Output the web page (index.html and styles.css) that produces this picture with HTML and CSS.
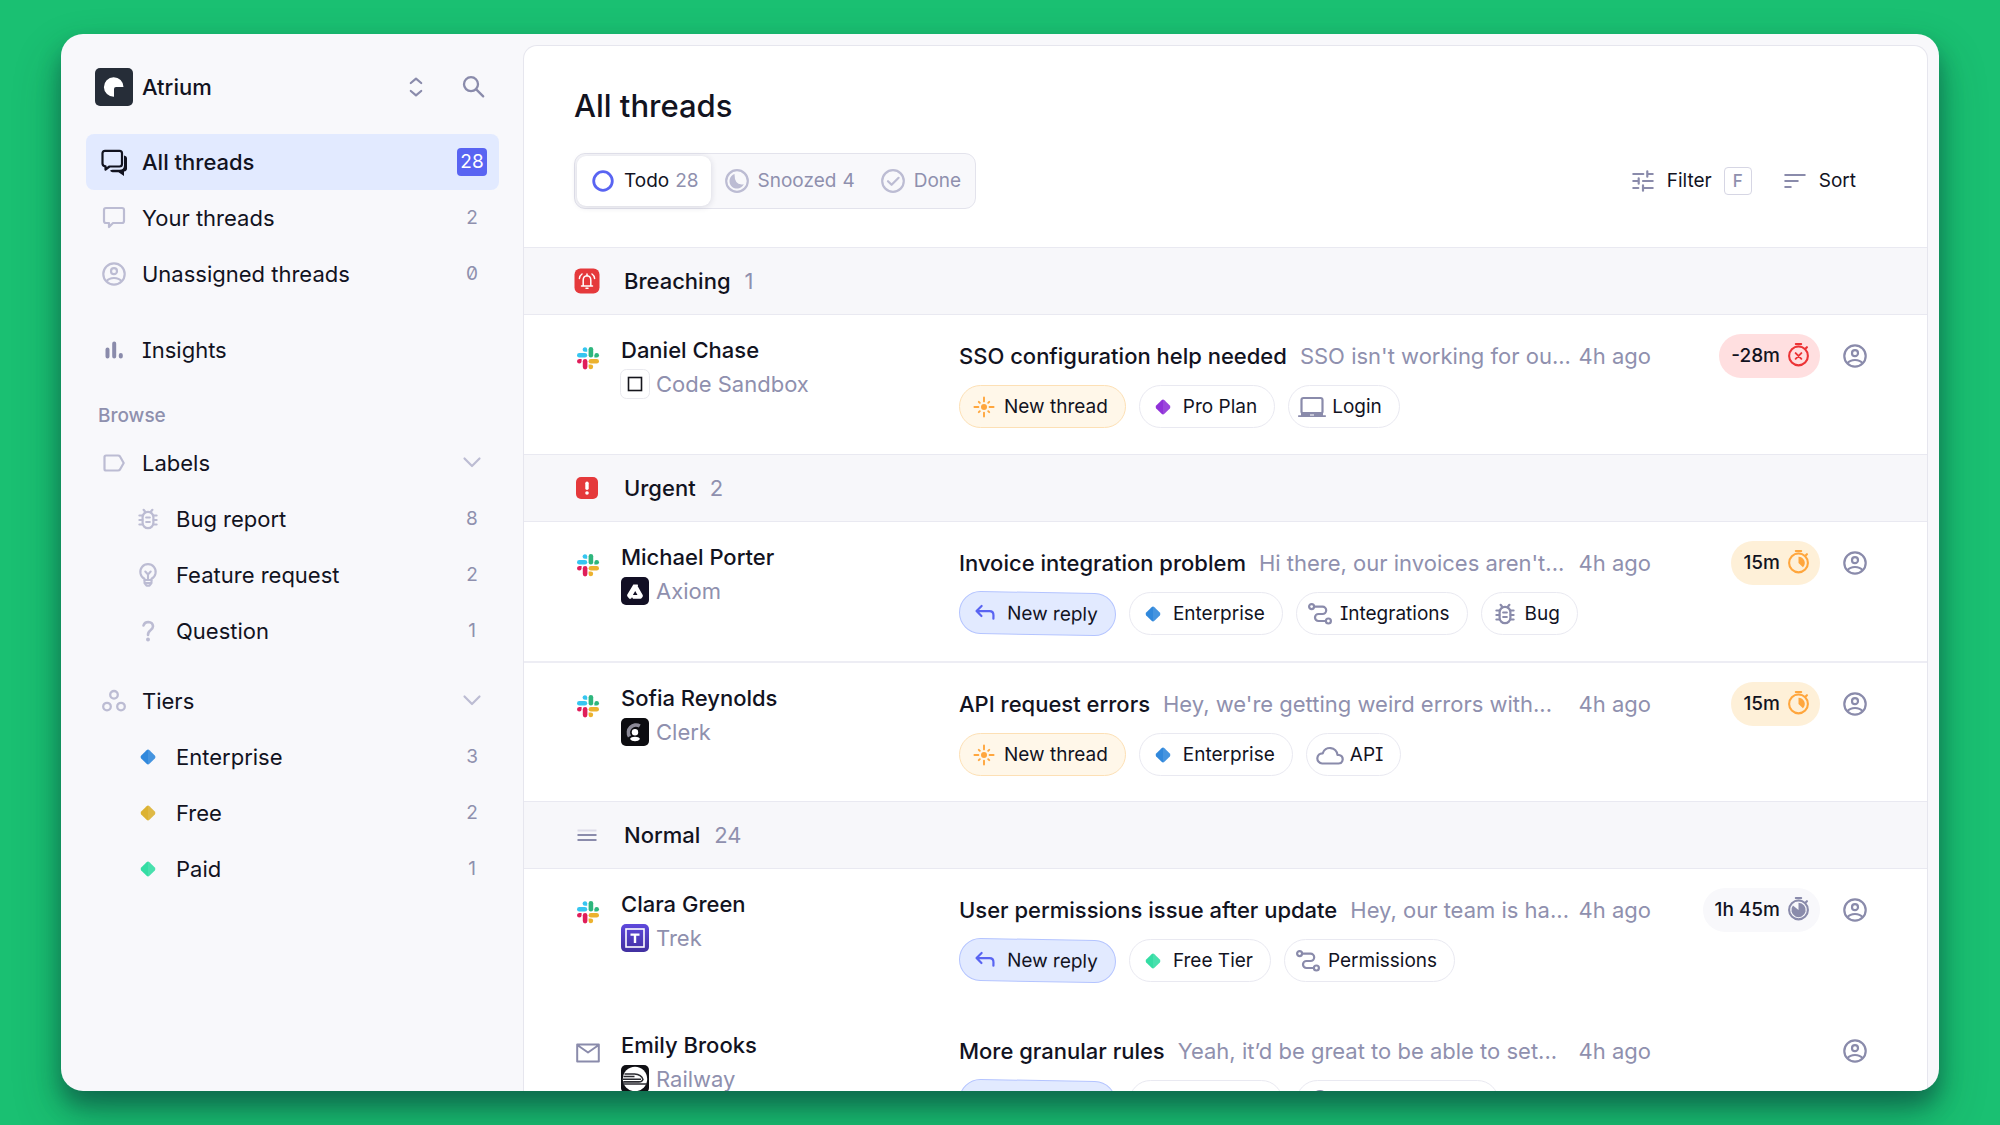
FILE: index.html
```html
<!DOCTYPE html>
<html lang="en">
<head>
    <meta charset="UTF-8">
    <meta name="viewport" content="width=device-width, initial-scale=1.0">
    <title>All threads - Atrium</title>
    <link rel="stylesheet" href="styles.css">
</head>
<body>
    <!-- Shared icons -->
    <svg class="sprite" aria-hidden="true">
        <symbol id="i-user" viewBox="0 0 24 24">
            <g fill="none" stroke="currentColor" stroke-width="2.200">
                <circle cx="12" cy="12" r="10.700"/>
                <circle cx="12" cy="9.200" r="3"/>
                <path d="M4.600 19.200c1.600-2.200 4.300-3.200 7.400-3.200s5.800 1 7.400 3.200"/>
            </g>
        </symbol>
        <symbol id="i-bug" viewBox="0 0 24 24">
            <g fill="none" stroke="currentColor" stroke-width="2.200" stroke-linecap="round">
                <rect x="6.600" y="4.800" width="10.800" height="16.400" rx="5.400"/>
                <path d="M10.200 10.500h3.600M10.200 15h3.600M7.600 2.800l2 2.400M16.400 2.800l-2 2.400M3.400 8.500h3M3.400 13h3M3.400 17.500h3.400M20.600 8.500h-3M20.600 13h-3M20.600 17.500h-3.400"/>
            </g>
        </symbol>
        <symbol id="i-bulb" viewBox="0 0 24 24">
            <g fill="none" stroke="currentColor" stroke-width="2.100" stroke-linecap="round" stroke-linejoin="round">
                <path d="M8.500 17v-1.300a7.700 7.700 0 1 1 7 0V17z"/>
                <path d="M12 16v-5M9.300 8.600 12 11.400l2.700-2.800M8.800 20h6.400M10.800 22.600h2.400M8.500 17v3l2 2.600h3l2-2.600v-3"/>
            </g>
        </symbol>
        <symbol id="i-diamond" viewBox="0 0 24 24">
            <path fill="currentColor" d="M10.600 5.200q1.400-1.200 2.800 0l5.400 5.400q1.200 1.400 0 2.800l-5.400 5.400q-1.400 1.200-2.800 0l-5.400-5.400q-1.200-1.400 0-2.800z"/>
            <path fill="#fff" fill-opacity="0.100" d="M12 4.700q.7 0 1.400.5l5.400 5.400q1.200 1.400 0 2.800l-5.400 5.400q-.7.5-1.400.5z"/>
        </symbol>
        <symbol id="i-chevron" viewBox="0 0 24 24">
            <path fill="none" stroke="currentColor" stroke-width="2.200" stroke-linecap="round" stroke-linejoin="round" d="M4.500 7.500 12 15l7.500-7.500"/>
        </symbol>
        <symbol id="i-spark" viewBox="0 0 24 24">
            <circle cx="12" cy="12" r="3" fill="currentColor"/>
            <path fill="none" stroke="currentColor" stroke-width="1.900" stroke-linecap="round" d="M12 2.400v4M12 17.600v4M2.400 12h4M17.600 12h4M6.800 6.800l1 1M16.200 16.200l1 1M6.800 17.200l1-1M16.200 7.800l1-1"/>
        </symbol>
        <symbol id="i-reply" viewBox="0 0 24 24">
            <path fill="none" stroke="currentColor" stroke-width="2.200" stroke-linecap="round" stroke-linejoin="round" d="M8.500 5 3.500 10l5 5M4 10h12.500q4 0 4 4v3.500"/>
        </symbol>
        <symbol id="i-route" viewBox="0 0 24 24">
            <g fill="none" stroke="currentColor" stroke-width="2.200" stroke-linecap="round">
                <circle cx="3.600" cy="4.600" r="2.500"/>
                <circle cx="20.400" cy="19" r="2.500"/>
                <path d="M6.200 4.600h8.300a3.700 3.700 0 0 1 0 7.400h-4a3.500 3.500 0 0 0 0 7h7.200"/>
            </g>
        </symbol>
        <symbol id="i-laptop" viewBox="0 0 28 24">
            <rect x="3.500" y="3" width="21" height="15.500" rx="2" fill="none" stroke="currentColor" stroke-width="2.200"/>
            <path fill="currentColor" fill-rule="evenodd" d="M3 17h22v3.200h2.400q.6 0 .6.900t-.6.900H.6q-.6 0-.6-.900t.6-.900H3zM12 19v1.400h4V19z"/>
        </symbol>
        <symbol id="i-cloud" viewBox="0 0 28 24">
            <path fill="none" stroke="currentColor" stroke-width="2.200" stroke-linejoin="round" d="M6.200 20.500h16.300a4.300 4.300 0 0 0 .8-8.500q-.8-.300-1.800-.200A7.600 7.600 0 0 0 6.700 10.300a5.100 5.100 0 0 0-.5 10.200z"/>
        </symbol>
        <symbol id="i-watch" viewBox="0 0 24 26">
            <g fill="none" stroke="currentColor" stroke-width="2.200" stroke-linecap="round">
                <circle cx="12" cy="14" r="9.800"/>
                <path d="M9.200 1.600h5.600M19.400 6.200l1.400-1.400"/>
            </g>
        </symbol>
        <symbol id="i-slack" viewBox="0 0 24 24">
            <g fill="#36c5f0"><rect x="1" y="7" width="10.200" height="4.600" rx="2.300"/><path d="M11.200 5.800V3.300a2.300 2.300 0 1 0-2.300 2.500z"/></g>
            <g fill="#2eb67d"><rect x="12.600" y="1" width="4.600" height="10.600" rx="2.300"/><path d="M18.400 11.600h2.400a2.300 2.300 0 1 0-2.400-2.300z"/></g>
            <g fill="#ecb22e"><rect x="12.600" y="13" width="10.400" height="4.600" rx="2.300"/><path d="M12.600 18.600v2.400a2.300 2.300 0 1 0 2.300-2.400z"/></g>
            <g fill="#e01e5a"><rect x="6.800" y="13" width="4.600" height="10.400" rx="2.300"/><path d="M5.600 13H3.200a2.300 2.300 0 1 0 2.400 2.300z"/></g>
        </symbol>
    </svg>

    <div class="window">
        <aside class="sidebar">
            <div class="workspace">
                <svg class="logo" viewBox="0 0 38 38"><rect width="38" height="38" rx="5" fill="#262d38"/><path fill="#fff" d="M28.500 19A9.800 9.800 0 1 0 19 28.800V21q0-2 2-2z"/></svg>
                <span class="workspace-name">Atrium</span>
                <button type="button" class="icon-button" aria-label="Switch workspace">
                    <svg class="icon" viewBox="0 0 24 24"><path fill="none" stroke="currentColor" stroke-width="2.200" stroke-linecap="round" stroke-linejoin="round" d="m6.800 8 5.200-4.300L17.200 8M6.800 16l5.200 4.300 5.200-4.300"/></svg>
                </button>
                <button type="button" class="icon-button" aria-label="Search">
                    <svg class="icon" viewBox="0 0 24 24"><g fill="none" stroke="currentColor" stroke-width="2.300" stroke-linecap="round"><circle cx="10" cy="9.200" r="7"/><path d="m15.200 14.400 7 7"/></g></svg>
                </button>
            </div>

            <nav>
                <ul class="nav-list">
                    <li><a href="#" class="nav-item active">
                        <svg class="nav-icon" viewBox="0 0 28 28"><path fill="none" stroke="currentColor" stroke-width="2.200" stroke-linejoin="round" d="M5 2.800h14.500q2.500 0 2.500 2.500v10.700q0 2.500-2.500 2.500H9.500l-4 3V18.300Q2.500 18 2.500 15.500V5.300q0-2.500 2.500-2.500z"/><path fill="currentColor" d="M24 7.500q3 .5 3 3v10q0 2.500-3 3V28l-5.500-3.800h-6q-1.500 0-2.500-1.400 1-1.100 2.500-1.100h7q4.500 0 4.500-4.500z"/></svg>
                        <span class="nav-label">All threads</span><span class="count badge">28</span></a></li>
                    <li><a href="#" class="nav-item">
                        <svg class="nav-icon" viewBox="0 0 28 28"><path fill="none" stroke="currentColor" stroke-width="2.200" stroke-linejoin="round" d="M6 4h16q2 0 2 2v11q0 2-2 2H13l-4 4v-4H6q-2 0-2-2V6q0-2 2-2z"/></svg>
                        <span class="nav-label">Your threads</span><span class="count">2</span></a></li>
                    <li><a href="#" class="nav-item">
                        <svg class="nav-icon small"><use href="#i-user"/></svg>
                        <span class="nav-label">Unassigned threads</span><span class="count">0</span></a></li>
                </ul>
                <ul class="nav-list spaced">
                    <li><a href="#" class="nav-item">
                        <svg class="nav-icon dark" viewBox="0 0 28 28"><path fill="none" stroke="currentColor" stroke-width="4" stroke-linecap="round" d="M7.500 13.500v7M14.200 7.500v13M20.800 19v1.500"/></svg>
                        <span class="nav-label">Insights</span></a></li>
                </ul>

                <h2 class="nav-heading">Browse</h2>
                <ul class="nav-list">
                    <li><button type="button" class="nav-item" aria-expanded="true">
                        <svg class="nav-icon" viewBox="0 0 28 28"><path fill="none" stroke="currentColor" stroke-width="2.200" stroke-linejoin="round" d="M6 6.500h12q1.300 0 2 1l3.700 6.500-3.700 6.500q-.7 1-2 1H6q-1.500 0-1.500-1.500V8Q4.500 6.500 6 6.500z"/></svg>
                        <span class="nav-label">Labels</span><svg class="chevron"><use href="#i-chevron"/></svg></button></li>
                    <li><a href="#" class="nav-item sub">
                        <svg class="nav-icon small"><use href="#i-bug"/></svg>
                        <span class="nav-label">Bug report</span><span class="count">8</span></a></li>
                    <li><a href="#" class="nav-item sub">
                        <svg class="nav-icon small"><use href="#i-bulb"/></svg>
                        <span class="nav-label">Feature request</span><span class="count">2</span></a></li>
                    <li><a href="#" class="nav-item sub">
                        <svg class="nav-icon small" viewBox="0 0 24 24"><path fill="none" stroke="currentColor" stroke-width="2.600" stroke-linecap="round" d="M7.500 6.500q1-3.500 4.700-3.500 4.500.2 4.800 4.200 0 2-2.500 4Q12 13 12 16"/><circle cx="12" cy="20.500" r="2" fill="currentColor"/></svg>
                        <span class="nav-label">Question</span><span class="count">1</span></a></li>
                </ul>
                <ul class="nav-list tiers">
                    <li><button type="button" class="nav-item" aria-expanded="true">
                        <svg class="nav-icon" viewBox="0 0 28 28"><g fill="none" stroke="currentColor" stroke-width="2.300"><circle cx="14" cy="7.800" r="3.800"/><circle cx="7" cy="19.600" r="3.800"/><circle cx="21" cy="19.600" r="3.800"/></g></svg>
                        <span class="nav-label">Tiers</span><svg class="chevron"><use href="#i-chevron"/></svg></button></li>
                    <li><a href="#" class="nav-item sub">
                        <svg class="nav-icon small blue"><use href="#i-diamond"/></svg>
                        <span class="nav-label">Enterprise</span><span class="count">3</span></a></li>
                    <li><a href="#" class="nav-item sub">
                        <svg class="nav-icon small gold"><use href="#i-diamond"/></svg>
                        <span class="nav-label">Free</span><span class="count">2</span></a></li>
                    <li><a href="#" class="nav-item sub">
                        <svg class="nav-icon small mint"><use href="#i-diamond"/></svg>
                        <span class="nav-label">Paid</span><span class="count">1</span></a></li>
                </ul>
            </nav>
        </aside>

        <main class="panel">
            <header class="panel-header">
                <h1>All threads</h1>
                <div class="toolbar">
                    <div class="tabs" role="tablist">
                        <button type="button" class="tab selected" role="tab" aria-selected="true">
                            <svg class="icon blue-ring" viewBox="0 0 24 24"><circle cx="12" cy="12" r="9.300" fill="none" stroke="currentColor" stroke-width="2.800"/></svg>
                            <span>Todo</span><span class="tab-count">28</span>
                        </button>
                        <button type="button" class="tab" role="tab" aria-selected="false">
                            <svg class="icon" viewBox="0 0 24 24"><circle cx="12" cy="12" r="10.800" fill="none" stroke="currentColor" stroke-width="2.200"/><path fill="currentColor" d="M9.500 5a7.500 7.500 0 1 0 9.300 10.200Q9.500 17 9.500 5z"/></svg>
                            <span>Snoozed</span><span class="tab-count">4</span>
                        </button>
                        <button type="button" class="tab" role="tab" aria-selected="false">
                            <svg class="icon" viewBox="0 0 24 24"><g fill="none" stroke="currentColor" stroke-width="2.200" stroke-linecap="round" stroke-linejoin="round"><circle cx="12" cy="12" r="10.800"/><path d="m7 12.200 3.600 3.600 7-7"/></g></svg>
                            <span>Done</span>
                        </button>
                    </div>
                    <div class="actions">
                        <button type="button" class="action">
                            <svg class="icon" viewBox="0 0 24 24"><path fill="none" stroke="currentColor" stroke-width="2.200" stroke-linecap="round" d="M2.300 5h10M16.300 2.300v5.400M16.300 5h5.400M2.300 12h5.400M7.700 9.300v5.400M12 12h9.700M2.300 19h5M12 16.300v5.400M12 19h9.700"/></svg>
                            <span>Filter</span><kbd>F</kbd>
                        </button>
                        <button type="button" class="action">
                            <svg class="icon" viewBox="0 0 24 24"><path fill="none" stroke="currentColor" stroke-width="2.200" stroke-linecap="round" d="M2.300 6h19.400M2.300 12h12.400M2.300 18h5.400"/></svg>
                            <span>Sort</span>
                        </button>
                    </div>
                </div>
            </header>

            <section>
                <h2 class="group">
                    <svg class="group-icon" viewBox="0 0 26 26"><rect x="0.500" y="0.500" width="25" height="25" rx="6" fill="#e5393b"/><g fill="none" stroke="#fff" stroke-width="1.500" stroke-linecap="round"><path d="M9.200 17.800v-5.600q0-4.200 3.800-4.400 3.800.2 3.800 4.400v5.600M7.500 18h11M13 6v1.500M12 20.200h2M8 6Q5.600 7.600 5.400 10.500M18 6q2.400 1.600 2.600 4.500"/></g></svg>
                    <span>Breaching</span><span class="group-count">1</span>
                </h2>
                <article class="thread">
                    <svg class="source"><use href="#i-slack"/></svg>
                    <div class="customer">
                        <div class="name">Daniel Chase</div>
                        <div class="company"><svg class="company-logo" viewBox="0 0 28 28"><rect x="-0.500" y="-0.500" width="29" height="29" rx="6" fill="#fff" stroke="#e9e9ee"/><rect x="7.500" y="7.500" width="13" height="13" fill="none" stroke="#15151c" stroke-width="1.600"/></svg>Code Sandbox</div>
                    </div>
                    <div class="subject">
                        <div class="summary">
                            <a href="#" class="title">SSO configuration help needed</a>
                            <span class="preview">SSO isn't working for ou...</span>
                            <time>4h ago</time>
                        </div>
                        <div class="chips">
                            <span class="chip new-thread"><svg class="icon"><use href="#i-spark"/></svg>New thread</span>
                            <span class="chip"><svg class="icon purple"><use href="#i-diamond"/></svg>Pro Plan</span>
                            <span class="chip"><svg class="icon wide"><use href="#i-laptop"/></svg>Login</span>
                        </div>
                    </div>
                    <div class="status">
                        <span class="sla late">-28m<svg class="watch" viewBox="0 0 24 26"><use href="#i-watch"/><path fill="none" stroke="currentColor" stroke-width="2" stroke-linecap="round" d="m9 11 6 6M15 11l-6 6"/></svg></span>
                        <button type="button" class="assignee" aria-label="Assign thread"><svg class="icon"><use href="#i-user"/></svg></button>
                    </div>
                </article>
            </section>

            <section>
                <h2 class="group">
                    <svg class="group-icon" viewBox="0 0 26 26"><rect x="2" y="2" width="22" height="22" rx="5" fill="#e5393b"/><rect x="11.300" y="6.500" width="3.400" height="8.500" rx="1.700" fill="#fff"/><circle cx="13" cy="18" r="1.800" fill="#fff"/></svg>
                    <span>Urgent</span><span class="group-count">2</span>
                </h2>
                <article class="thread">
                    <svg class="source"><use href="#i-slack"/></svg>
                    <div class="customer">
                        <div class="name">Michael Porter</div>
                        <div class="company"><svg class="company-logo" viewBox="0 0 28 28"><rect width="28" height="28" rx="5" fill="#120f24"/><path fill="#fff" fill-rule="evenodd" d="M12.300 7.500h4q.8 0 .7.900l-.3.900 5 8.700q.5 1-.2 1.900l-.8 1.200q-.4.600-1.200.600H12l-1-1.500-1 1.500H8.300l-2-2.500q-.4-1 0-1.800l4.700-7.600zM14.200 14l-2.300 4h4.600z"/></svg>Axiom</div>
                    </div>
                    <div class="subject">
                        <div class="summary">
                            <a href="#" class="title">Invoice integration problem</a>
                            <span class="preview">Hi there, our invoices aren't...</span>
                            <time>4h ago</time>
                        </div>
                        <div class="chips">
                            <span class="chip new-reply"><svg class="icon"><use href="#i-reply"/></svg>New reply</span>
                            <span class="chip"><svg class="icon blue"><use href="#i-diamond"/></svg>Enterprise</span>
                            <span class="chip"><svg class="icon"><use href="#i-route"/></svg>Integrations</span>
                            <span class="chip"><svg class="icon"><use href="#i-bug"/></svg>Bug</span>
                        </div>
                    </div>
                    <div class="status">
                        <span class="sla soon">15m<svg class="watch" viewBox="0 0 24 26"><use href="#i-watch"/><path fill="currentColor" d="M12 14V7.500a6.500 6.500 0 0 1 4.600 11.100z"/></svg></span>
                        <button type="button" class="assignee" aria-label="Assign thread"><svg class="icon"><use href="#i-user"/></svg></button>
                    </div>
                </article>
                <article class="thread">
                    <svg class="source"><use href="#i-slack"/></svg>
                    <div class="customer">
                        <div class="name">Sofia Reynolds</div>
                        <div class="company"><svg class="company-logo" viewBox="0 0 28 28"><rect width="28" height="28" rx="5" fill="#0c0c10"/><path fill="none" stroke="#8c8a97" stroke-width="3.600" d="M18.800 8A7.600 7.600 0 0 0 8.500 18.500"/><circle cx="14" cy="14.300" r="3.200" fill="#fff"/><path fill="#fff" d="M9 21q1-2.200 5-2.200t5 2.200q-1.400 2.200-5 2.200T9 21z"/></svg>Clerk</div>
                    </div>
                    <div class="subject">
                        <div class="summary">
                            <a href="#" class="title">API request errors</a>
                            <span class="preview">Hey, we're getting weird errors with...</span>
                            <time>4h ago</time>
                        </div>
                        <div class="chips">
                            <span class="chip new-thread"><svg class="icon"><use href="#i-spark"/></svg>New thread</span>
                            <span class="chip"><svg class="icon blue"><use href="#i-diamond"/></svg>Enterprise</span>
                            <span class="chip"><svg class="icon wide"><use href="#i-cloud"/></svg>API</span>
                        </div>
                    </div>
                    <div class="status">
                        <span class="sla soon">15m<svg class="watch" viewBox="0 0 24 26"><use href="#i-watch"/><path fill="currentColor" d="M12 14V7.500a6.500 6.500 0 0 1 4.600 11.100z"/></svg></span>
                        <button type="button" class="assignee" aria-label="Assign thread"><svg class="icon"><use href="#i-user"/></svg></button>
                    </div>
                </article>
            </section>

            <section class="plain">
                <h2 class="group">
                    <svg class="group-icon" viewBox="0 0 26 26"><path stroke="#dcdbe8" stroke-width="2" d="M3.500 8.500h19"/><path stroke="#8a8bab" stroke-width="2.200" d="M3.500 13h19M3.500 18h19"/></svg>
                    <span>Normal</span><span class="group-count">24</span>
                </h2>
                <article class="thread">
                    <svg class="source"><use href="#i-slack"/></svg>
                    <div class="customer">
                        <div class="name">Clara Green</div>
                        <div class="company"><svg class="company-logo" viewBox="0 0 28 28"><defs><linearGradient id="trek" x2="0" y2="1"><stop offset="0" stop-color="#5e48dc"/><stop offset="1" stop-color="#4130a0"/></linearGradient></defs><rect width="28" height="28" rx="5" fill="url(#trek)"/><rect x="5" y="5" width="18" height="18" fill="none" stroke="#fff" stroke-width="1.600"/><path fill="none" stroke="#fff" stroke-width="2.400" d="M9.500 10.600h9M14 10v9"/></svg>Trek</div>
                    </div>
                    <div class="subject">
                        <div class="summary">
                            <a href="#" class="title">User permissions issue after update</a>
                            <span class="preview">Hey, our team is ha...</span>
                            <time>4h ago</time>
                        </div>
                        <div class="chips">
                            <span class="chip new-reply"><svg class="icon"><use href="#i-reply"/></svg>New reply</span>
                            <span class="chip"><svg class="icon mint"><use href="#i-diamond"/></svg>Free Tier</span>
                            <span class="chip"><svg class="icon"><use href="#i-route"/></svg>Permissions</span>
                        </div>
                    </div>
                    <div class="status">
                        <span class="sla">1h 45m<svg class="watch" viewBox="0 0 24 26"><use href="#i-watch"/><path fill="currentColor" d="M12 14V6.500a7.500 7.500 0 1 1-5.800 2.800z"/></svg></span>
                        <button type="button" class="assignee" aria-label="Assign thread"><svg class="icon"><use href="#i-user"/></svg></button>
                    </div>
                </article>
                <article class="thread">
                    <svg class="source" viewBox="0 0 24 24"><path fill="none" stroke="#8a8bab" stroke-width="2" stroke-linejoin="round" d="M1.200 3.500h21.600v17H1.200zM2 4.500l10 7 10-7"/></svg>
                    <div class="customer">
                        <div class="name">Emily Brooks</div>
                        <div class="company"><svg class="company-logo" viewBox="0 0 28 28"><rect width="28" height="28" rx="5" fill="#0f0f14"/><circle cx="14" cy="14" r="12.200" fill="#fff"/><g fill="none" stroke="#2a2a30" stroke-width="1.400"><path d="M3.500 9h10q7 .5 8.500 5.500-1 2.500-4 2.500H2M2.500 11.500h11M2 14.300h18M2 19h24M3 16.600h16"/></g></svg>Railway</div>
                    </div>
                    <div class="subject">
                        <div class="summary">
                            <a href="#" class="title">More granular rules</a>
                            <span class="preview">Yeah, it’d be great to be able to set...</span>
                            <time>4h ago</time>
                        </div>
                        <div class="chips">
                            <span class="chip new-reply"><svg class="icon"><use href="#i-reply"/></svg>New reply</span>
                            <span class="chip"><svg class="icon blue"><use href="#i-diamond"/></svg>Enterprise</span>
                            <span class="chip"><svg class="icon"><use href="#i-bulb"/></svg>Feature request</span>
                        </div>
                    </div>
                    <div class="status">
                        <button type="button" class="assignee" aria-label="Assign thread"><svg class="icon"><use href="#i-user"/></svg></button>
                    </div>
                </article>
            </section>
        </main>
    </div>
</body>
</html>
```
FILE: styles.css
```css
* {
    box-sizing: border-box;
}

body {
    margin: 0;
    height: 100vh;
    padding: 34px 61px;
    background-color: #1ac072;
    font-family: Inter, "Noto Sans", sans-serif;
    font-size: 22px;
    line-height: 34px;
    color: #12131f;
    overflow: hidden;
}

h1,
h2,
ul {
    margin: 0;
    padding: 0;
    font-size: inherit;
    font-weight: 500;
}

ul {
    list-style: none;
    font-weight: 400;
}

a {
    color: inherit;
    text-decoration: none;
}

button {
    margin: 0;
    padding: 0;
    border: 0;
    background: none;
    font: inherit;
    color: inherit;
    text-align: left;
    cursor: pointer;
}

svg {
    display: block;
    flex: none;
    overflow: visible;
}

.sprite {
    position: absolute;
    width: 0;
    height: 0;
}

.icon {
    width: 24px;
    height: 24px;
}

.window {
    display: flex;
    height: 100%;
    padding: 11px 11px 0 0;
    background-color: #f8f8fb;
    border-radius: 22px;
    box-shadow: 0 14px 22px rgba(8, 36, 50, 0.4), 0 24px 48px rgba(8, 60, 50, 0.3);
    overflow: hidden;
}

/* Sidebar */
.sidebar {
    flex: none;
    width: 462px;
    padding: 23px 24px 0 25px;
}

.workspace {
    display: flex;
    align-items: center;
    height: 38px;
    margin-bottom: 28px;
    padding: 0 14px 0 9px;
    font-weight: 500;
}

.workspace-name {
    flex: 1;
    margin-left: 9px;
}

.logo {
    width: 38px;
    height: 38px;
}

.icon-button {
    margin-left: 33px;
    color: #8a8bab;
}

.nav-item {
    display: flex;
    align-items: center;
    width: 100%;
    height: 56px;
    padding: 0 12px 0 14px;
    border-radius: 8px;
    font-feature-settings: "cv08", "zero";
}

.nav-item.sub {
    padding-left: 48px;
}

.nav-item.active {
    background-color: #e2eaff;
    font-weight: 500;
}

.nav-item.active .nav-icon {
    color: #12131f;
}

.nav-icon {
    width: 28px;
    height: 28px;
    color: #bcbcd3;
}

.nav-icon.small {
    width: 24px;
    height: 24px;
    margin: 0 2px;
}

.nav-icon.dark {
    color: #8a8bab;
}

.nav-label {
    flex: 1;
    margin-left: 14px;
}

.count {
    width: 30px;
    font-size: 19px;
    font-weight: 400;
    line-height: 28px;
    text-align: center;
    color: #8f90ae;
}

.count.badge {
    background-color: #5964f2;
    border-radius: 4px;
    color: #fff;
}

.chevron {
    width: 24px;
    height: 24px;
    margin-right: 3px;
    color: #bcbcd3;
}

.spaced {
    margin-top: 20px;
}

.nav-heading {
    margin: 21px 0 2px 12px;
    font-size: 19px;
    color: #8f90ae;
}

.tiers {
    margin-top: 14px;
}

.icon.blue,
.nav-icon.blue {
    color: #3088dc;
}

.nav-icon.gold {
    color: #dcb232;
}

.icon.mint,
.nav-icon.mint {
    color: #34dda4;
}

.icon.purple {
    color: #9031d9;
}

/* Thread list */
.panel {
    flex: 1;
    min-width: 0;
    background-color: #fff;
    border: 1px solid #e6e6ee;
    border-bottom: 0;
    border-radius: 14px 14px 0 0;
    overflow: hidden;
}

.panel-header {
    padding: 40px 60px 38px 50px;
}

h1 {
    margin-bottom: 27px;
    font-size: 31px;
    font-weight: 450;
    line-height: 40px;
}

.toolbar,
.actions,
.action,
.tabs,
.tab {
    display: flex;
    align-items: center;
}

.toolbar {
    justify-content: space-between;
    font-size: 19px;
}

.tabs {
    height: 56px;
    padding: 2px;
    background-color: #f8f8fb;
    border: 1px solid #e3e3ec;
    border-radius: 11px;
    color: #8f90ae;
}

.tab {
    height: 50px;
    padding: 0 12px 0 14px;
    border-radius: 9px;
}

.tab .icon {
    margin-right: 9px;
    color: #bcbcd3;
}

.tab.selected {
    background-color: #fff;
    box-shadow: 0 1px 6px rgba(30, 30, 70, 0.15);
    color: #12131f;
}

.tab .blue-ring {
    color: #5964f2;
}

.tab-count {
    margin-left: 6px;
    color: #8f90ae;
}

.actions {
    gap: 31px;
    padding-right: 11px;
}

.action .icon {
    margin-right: 12px;
    color: #8a8bab;
}

kbd {
    width: 28px;
    margin-left: 12px;
    border: 1px solid #d6d6e4;
    border-radius: 4px;
    font-family: inherit;
    font-size: 17px;
    font-weight: 500;
    line-height: 26px;
    text-align: center;
    color: #8f90ae;
}

.group {
    display: flex;
    align-items: center;
    height: 68px;
    padding: 0 50px;
    background-color: #f7f7fa;
    border-top: 1px solid #e9e9f1;
    border-bottom: 1px solid #e9e9f1;
}

.group-icon {
    width: 26px;
    height: 26px;
    margin-right: 24px;
}

.group-count {
    margin-left: 14px;
    font-weight: 400;
    color: #8f90ae;
}

.thread {
    display: grid;
    grid-template-columns: 47px 338px minmax(0, 1fr) 216px;
    height: 139px;
    padding: 18px 60px 0 50px;
}

.thread + .thread {
    height: 140px;
    border-top: 2px solid #ededf4;
}

.plain .thread + .thread {
    border-color: transparent;
}

.source {
    width: 24px;
    height: 24px;
    margin: 13px 2px;
}

.name {
    font-weight: 500;
}

.company {
    display: flex;
    align-items: center;
    color: #8f90ae;
}

.company-logo {
    width: 28px;
    height: 28px;
    margin-right: 7px;
}

.summary {
    display: flex;
    padding-top: 6px;
    white-space: nowrap;
}

.title {
    font-weight: 500;
}

.preview {
    flex: 1;
    min-width: 0;
    margin: 0 4px 0 13px;
    overflow: hidden;
    color: #8f90ae;
}

time {
    color: #8f90ae;
}

.chips {
    display: flex;
    gap: 13px;
    padding-top: 12px;
}

.chip {
    display: flex;
    align-items: center;
    gap: 8px;
    height: 43px;
    padding: 0 17px 0 11px;
    border: 1px solid #e9e9f1;
    border-radius: 22px;
    font-size: 19px;
    white-space: nowrap;
    font-feature-settings: "cv08";
}

.chip .icon {
    color: #8a8bab;
}

.chip .icon.wide {
    width: 28px;
    margin: 0 -2px;
}

.chip .icon.blue {
    color: #3088dc;
}

.chip .icon.mint {
    color: #34dda4;
}

.chip .icon.purple {
    color: #9031d9;
}

.chip.new-thread {
    padding-left: 12px;
    background-color: #fff7e9;
    border-color: #fde0b5;
}

.chip.new-thread .icon {
    color: #ffa63d;
}

.chip.new-reply {
    gap: 10px;
    padding-left: 13px;
    background-color: #e2eaff;
    border-color: #b4c4ff;
    transform: rotate(1deg);
}

.chip.new-reply .icon {
    color: #5964f2;
}

.status {
    display: flex;
    justify-content: flex-end;
    align-items: center;
    height: 46px;
    gap: 23px;
}

.sla {
    display: flex;
    align-items: center;
    gap: 7px;
    height: 44px;
    padding: 0 10px 0 12px;
    background-color: #f8f8fb;
    border-radius: 22px;
    font-size: 19px;
    font-weight: 500;
}

.watch {
    width: 23px;
    height: 26px;
    margin-bottom: 3px;
    color: #8a8bab;
}

.sla.late {
    background-color: #ffdfe0;
}

.late .watch {
    color: #ec3436;
}

.sla.soon {
    background-color: #fef0d8;
}

.soon .watch {
    color: #ffa63d;
}

.assignee {
    color: #8a8bab;
}
```
